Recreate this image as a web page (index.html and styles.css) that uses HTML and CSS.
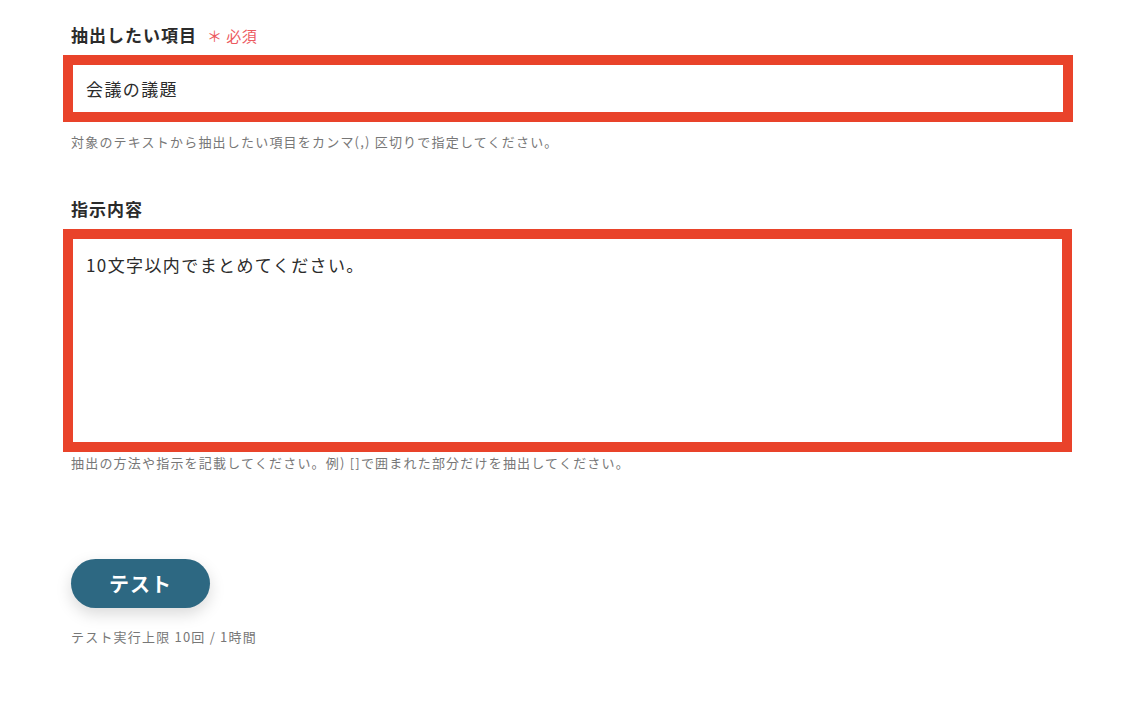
FILE: index.html
```html
<!DOCTYPE html>
<html lang="ja">
<head>
  <meta charset="UTF-8" />
  <meta name="viewport" content="width=device-width, initial-scale=1.0" />
  <title>抽出設定</title>
  <link rel="stylesheet" href="styles.css">
</head>
<body>
  <main class="form">
    <div class="field">
      <label class="label" for="koumoku">抽出したい項目 <span class="hissu">＊ 必須</span></label>
      <div class="waku">
        <input class="input" id="koumoku" type="text" value="会議の議題">
      </div>
      <p class="hint hint-input">対象のテキストから抽出したい項目をカンマ(,) 区切りで指定してください。</p>
    </div>

    <div class="field field-shiji">
      <label class="label" for="shiji">指示内容</label>
      <div class="waku">
        <textarea class="input textarea" id="shiji">10文字以内でまとめてください。</textarea>
      </div>
      <p class="hint hint-textarea">抽出の方法や指示を記載してください。例) []で囲まれた部分だけを抽出してください。</p>
    </div>

    <div class="aktion">
      <button class="btn-test" type="button">テスト</button>
      <p class="limit">テスト実行上限 10回 / 1時間</p>
    </div>
  </main>
</body>
</html>
```

FILE: styles.css
```css
:root {
  --rot: #e9432a;
  --text: #2b2b2b;
  --grau: #777777;
  --pflicht: #ec5a5f;
  --btn: #2d6882;
}

* {
  box-sizing: border-box;
  margin: 0;
  padding: 0;
}

body {
  font-family: "Noto Sans CJK JP", "Noto Sans", sans-serif;
  background: #ffffff;
  color: var(--text);
  width: 1135px;
  height: 701px;
  overflow: hidden;
}

.form {
  width: 1010px;
  margin-left: 63px;
  padding-top: 23px;
}

.label {
  display: flex;
  align-items: baseline;
  height: 24px;
  padding-left: 8px;
  font-size: 17px;
  line-height: 24px;
  font-weight: bold;
  letter-spacing: 1px;
  margin-bottom: 8px;
}

.hissu {
  color: var(--pflicht);
  font-size: 15px;
  font-weight: normal;
  margin-left: 10px;
  letter-spacing: 0.5px;
}

.waku {
  border: 10px solid var(--rot);
  background: #ffffff;
}

.input {
  display: block;
  width: 100%;
  height: 47px;
  border: none;
  outline: none;
  padding: 0 13px;
  font-family: inherit;
  font-size: 17px;
  letter-spacing: 1.4px;
  color: var(--text);
  background: #ffffff;
}

.textarea {
  height: 203px;
  padding: 14px 13px;
  line-height: 24px;
  resize: none;
}

.field-shiji {
  margin-top: 46px;
}

.field-shiji .waku {
  width: 1009px;
}

.hint {
  padding-left: 8px;
  font-size: 13px;
  line-height: 18px;
  letter-spacing: 1.2px;
  color: var(--grau);
}

.hint-input {
  margin-top: 11px;
}

.hint-textarea {
  margin-top: 2px;
}

.aktion {
  margin-top: 87px;
  padding-left: 8px;
}

.btn-test {
  width: 139px;
  height: 49px;
  border: none;
  border-radius: 25px;
  background: var(--btn);
  color: #ffffff;
  font-family: inherit;
  font-size: 20px;
  font-weight: bold;
  letter-spacing: 1px;
  box-shadow: 0 6px 16px rgba(0, 0, 0, 0.15);
}

.limit {
  margin-top: 19px;
  font-size: 13px;
  line-height: 20px;
  letter-spacing: 1.2px;
  color: var(--grau);
}
```
